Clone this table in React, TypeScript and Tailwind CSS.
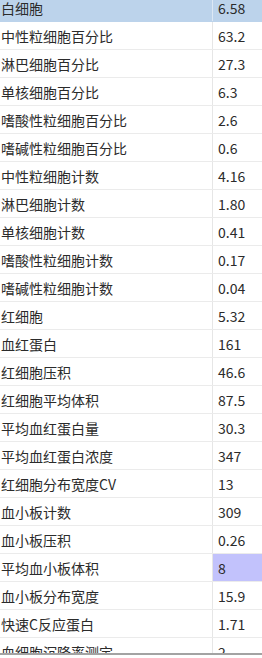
import React from "react";

const rows: [string, string][] = [
  ["白细胞", "6.58"],
  ["中性粒细胞百分比", "63.2"],
  ["淋巴细胞百分比", "27.3"],
  ["单核细胞百分比", "6.3"],
  ["嗜酸性粒细胞百分比", "2.6"],
  ["嗜碱性粒细胞百分比", "0.6"],
  ["中性粒细胞计数", "4.16"],
  ["淋巴细胞计数", "1.80"],
  ["单核细胞计数", "0.41"],
  ["嗜酸性粒细胞计数", "0.17"],
  ["嗜碱性粒细胞计数", "0.04"],
  ["红细胞", "5.32"],
  ["血红蛋白", "161"],
  ["红细胞压积", "46.6"],
  ["红细胞平均体积", "87.5"],
  ["平均血红蛋白量", "30.3"],
  ["平均血红蛋白浓度", "347"],
  ["红细胞分布宽度CV", "13"],
  ["血小板计数", "309"],
  ["血小板压积", "0.26"],
  ["平均血小板体积", "8"],
  ["血小板分布宽度", "15.9"],
  ["快速C反应蛋白", "1.71"],
  ["血细胞沉降率测定", "2"],
];

export default function App() {
  return (
    <div
      className="w-[262px] h-[658px] bg-white text-[#2b2b2b] text-[14px]"
      style={{ fontFamily: '"Noto Sans CJK SC", "Noto Sans", sans-serif' }}
    >
      <div className="h-[655px] overflow-hidden border-b-2 border-[#a3a3a3]">
        <div className="-mt-[6px]">
          {rows.map(([label, value], i) => {
            const selected = i === 0;
            const highlight = i === 20;
            return (
              <div
                key={label}
                className={`grid grid-cols-[212px_1fr] h-[28px] border-b ${
                  selected ? "bg-[#bcd3eb] border-[#bcd3eb]" : "border-[#ebebeb]"
                }`}
              >
                <div className="flex items-center pl-[1px] whitespace-nowrap leading-none">
                  {label}
                </div>
                <div
                  className={`flex items-center pl-[5px] border-l leading-none ${
                    selected ? "border-[#dce8f5]" : "border-[#e6e6e6]"
                  } ${highlight ? "bg-[#c2c2fc]" : ""}`}
                >
                  {value}
                </div>
              </div>
            );
          })}
        </div>
      </div>
    </div>
  );
}
